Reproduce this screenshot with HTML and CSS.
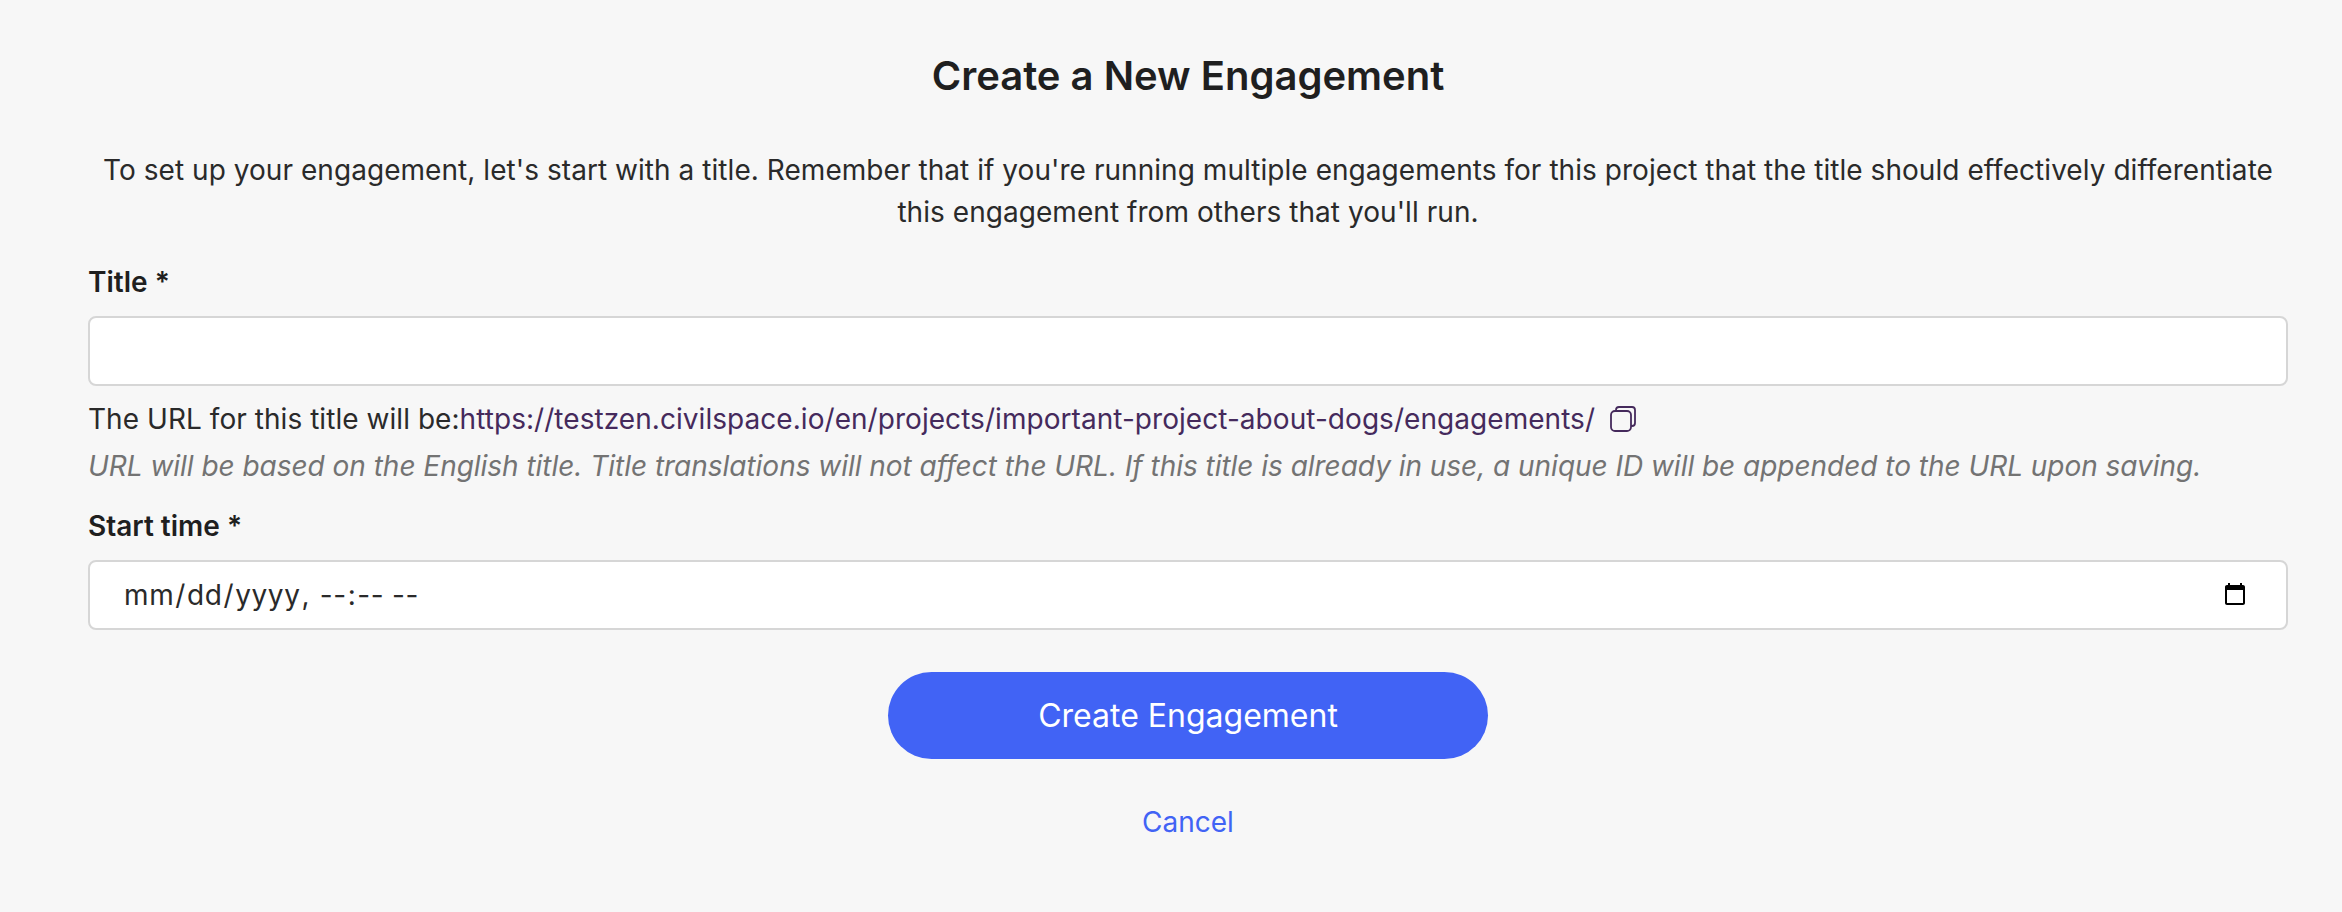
FILE: index.html
```html
<!DOCTYPE html>
<html lang="en">
<head>
<meta charset="utf-8">
<title>Create a New Engagement</title>
<link rel="stylesheet" href="styles.css">
</head>
<body>
<main class="page">
  <h1 class="heading">Create a New Engagement</h1>
  <p class="intro">To set up your engagement, let's start with a title. Remember that if you're running multiple engagements for this project that the title should effectively differentiate this engagement from others that you'll run.</p>
  <form class="form">
    <label class="label" for="title">Title *</label>
    <input class="field" id="title" type="text">
    <div class="url-line">
      <span>The URL for this title will be:</span><a class="url" href="#">https://testzen.civilspace.io/en/projects/important-project-about-dogs/engagements/</a>
      <svg class="copy" viewBox="0 0 26 26" width="26" height="26" fill="none" stroke="#452a5c" stroke-width="1.8" aria-hidden="true">
        <rect x="1" y="5" width="20" height="20" rx="4"/>
        <path d="M6 5V4a3 3 0 0 1 3-3h13a3 3 0 0 1 3 3v13a3 3 0 0 1-3 3h-1"/>
      </svg>
    </div>
    <p class="hint">URL will be based on the English title. Title translations will not affect the URL. If this title is already in use, a unique ID will be appended to the URL upon saving.</p>
    <label class="label label-second" for="start">Start time *</label>
    <input class="field field-date" id="start" type="datetime-local">
    <div class="actions">
      <button class="primary" type="button">Create Engagement</button>
      <a class="cancel" href="#">Cancel</a>
    </div>
  </form>
</main>
</body>
</html>
```
FILE: styles.css
```css
* { box-sizing: border-box; }
html, body { margin: 0; height: 100%; }
body {
  background: #f7f7f7;
  color: #2a2a2a;
  font-family: Inter, "Liberation Sans", sans-serif;
  font-size: 28px;
  font-weight: 400;
  letter-spacing: 0.05px;
  line-height: 42px;
}
.page { padding: 49px 54px 0 88px; }
.heading {
  margin: 0 0 46px;
  text-align: center;
  font-size: 40px;
  line-height: 54px;
  font-weight: 600;
  letter-spacing: 0;
  color: #1f1f1f;
}
.intro { margin: 0 0 28px; text-align: center; }
.form { display: flex; flex-direction: column; }
.label { font-weight: 600; line-height: 42px; margin-bottom: 13px; letter-spacing: 0; color: #1f1f1f; }
.label-second { margin-top: 18px; }
.field {
  display: block;
  width: 100%;
  height: 70px;
  border: 2px solid #d6d6d6;
  border-radius: 8px;
  background: #fff;
  font: inherit;
  color: #2a2a2a;
  padding: 0 32px;
}
.field-date { padding: 0 38px 0 33px; letter-spacing: 0.6px; }
.field-date::-webkit-calendar-picker-indicator { width: 26px; height: 26px; margin: 0; padding: 0; }
.url-line { display: flex; align-items: center; margin-top: 12px; }
.url { color: #452a5c; text-decoration: none; }
.copy { margin-left: 15px; }
.hint { margin: 5px 0 0; font-style: italic; color: #737373; letter-spacing: -0.03px; }
.actions { display: flex; flex-direction: column; align-items: center; margin-top: 42px; }
.primary {
  width: 600px;
  height: 87px;
  border: 0;
  border-radius: 44px;
  background: #4163f5;
  color: #fff;
  font: inherit;
  font-size: 32px;
  letter-spacing: 0;
}
.cancel { margin-top: 42px; color: #4163f5; text-decoration: none; letter-spacing: 0; }
```
